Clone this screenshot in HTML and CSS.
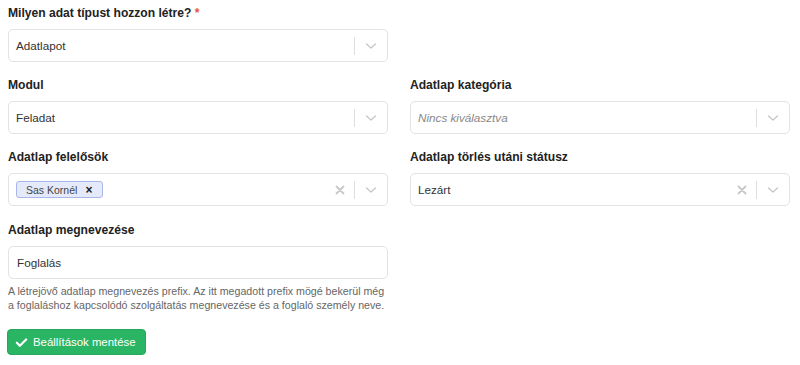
FILE: index.html
```html
<!DOCTYPE html>
<html lang="hu">
<head>
<meta charset="utf-8">
<link rel="stylesheet" href="styles.css">
</head>
<body>
<form class="form">
  <div class="group">
    <label class="label">Milyen adat típust hozzon létre? <span class="req">*</span></label>
    <div class="row">
      <div class="select">
        <span class="value">Adatlapot</span>
        <span class="indicators">
          <span class="sep"></span>
          <svg class="chev" width="20" height="20" viewBox="0 0 20 20"><path d="M5.5 8l4.5 4 4.5-4" fill="none" stroke="#c8c8c8" stroke-width="1.4" stroke-linecap="round" stroke-linejoin="round"/></svg>
        </span>
      </div>
      <div></div>
    </div>
  </div>

  <div class="group">
    <div class="row">
      <div>
        <label class="label">Modul</label>
        <div class="select">
          <span class="value">Feladat</span>
          <span class="indicators">
            <span class="sep"></span>
            <svg class="chev" width="20" height="20" viewBox="0 0 20 20"><path d="M5.5 8l4.5 4 4.5-4" fill="none" stroke="#c8c8c8" stroke-width="1.4" stroke-linecap="round" stroke-linejoin="round"/></svg>
          </span>
        </div>
      </div>
      <div>
        <label class="label">Adatlap kategória</label>
        <div class="select">
          <span class="value placeholder">Nincs kiválasztva</span>
          <span class="indicators">
            <span class="sep"></span>
            <svg class="chev" width="20" height="20" viewBox="0 0 20 20"><path d="M5.5 8l4.5 4 4.5-4" fill="none" stroke="#c8c8c8" stroke-width="1.4" stroke-linecap="round" stroke-linejoin="round"/></svg>
          </span>
        </div>
      </div>
    </div>
  </div>

  <div class="group group-3">
    <div class="row">
      <div>
        <label class="label">Adatlap felelősök</label>
        <div class="select">
          <span class="value"><span class="tag"><span class="tag-text">Sas Kornél</span><span class="tag-x">×</span></span></span>
          <span class="indicators">
            <svg class="clear" width="20" height="20" viewBox="0 0 20 20"><path d="M6.5 6.5l7 7M13.5 6.5l-7 7" fill="none" stroke="#c8c8c8" stroke-width="1.8" stroke-linecap="round"/></svg>
            <span class="sep"></span>
            <svg class="chev" width="20" height="20" viewBox="0 0 20 20"><path d="M5.5 8l4.5 4 4.5-4" fill="none" stroke="#c8c8c8" stroke-width="1.4" stroke-linecap="round" stroke-linejoin="round"/></svg>
          </span>
        </div>
      </div>
      <div>
        <label class="label">Adatlap törlés utáni státusz</label>
        <div class="select">
          <span class="value">Lezárt</span>
          <span class="indicators">
            <svg class="clear" width="20" height="20" viewBox="0 0 20 20"><path d="M6.5 6.5l7 7M13.5 6.5l-7 7" fill="none" stroke="#c8c8c8" stroke-width="1.8" stroke-linecap="round"/></svg>
            <span class="sep"></span>
            <svg class="chev" width="20" height="20" viewBox="0 0 20 20"><path d="M5.5 8l4.5 4 4.5-4" fill="none" stroke="#c8c8c8" stroke-width="1.4" stroke-linecap="round" stroke-linejoin="round"/></svg>
          </span>
        </div>
      </div>
    </div>
  </div>

  <div class="group group-4">
    <div class="row">
      <div>
        <label class="label">Adatlap megnevezése</label>
        <div class="input">Foglalás</div>
        <p class="help">A létrejövő adatlap megnevezés prefix. Az itt megadott prefix mögé bekerül még a foglaláshoz kapcsolódó szolgáltatás megnevezése és a foglaló személy neve.</p>
      </div>
      <div></div>
    </div>
  </div>

  <button type="button" class="btn">
    <svg width="13" height="13" viewBox="0 0 14 14"><path d="M2 7.3l3.2 3.2L12 3.7" fill="none" stroke="#fff" stroke-width="2.4" stroke-linecap="round" stroke-linejoin="round"/></svg>
    <span>Beállítások mentése</span>
  </button>
</form>
</body>
</html>
```
FILE: styles.css
```css
* { box-sizing: border-box; }
html, body { margin: 0; background: #fff; }
body {
  font-family: "Liberation Sans", Arial, sans-serif;
  color: #333;
  padding: 5px 8px 0 8px;
}
.form { width: 782px; }
.group { margin-bottom: 15px; }
.group-3 { margin-bottom: 16px; }
.group-4 { margin-bottom: 17px; }
.row {
  display: grid;
  grid-template-columns: 380px 380px;
  column-gap: 22px;
}
.label {
  display: block;
  font-size: 12.1px;
  font-weight: bold;
  color: #222;
  line-height: 16px;
  margin-bottom: 8px;
}
.req { color: #e5534b; font-weight: bold; }
.select, .input {
  height: 33px;
  border: 1px solid #e3e3e3;
  border-radius: 5px;
  display: flex;
  align-items: center;
  font-size: 11.7px;
  color: #333;
}
.select .value {
  flex: 1;
  padding-left: 7px;
  display: flex;
  align-items: center;
}
.placeholder { color: #888; font-style: italic; }
.indicators {
  display: flex;
  align-items: center;
  padding-right: 6px;
}
.sep {
  width: 1px;
  height: 18px;
  background: #dedede;
  margin: 0 6px 0 4px;
}
.chev, .clear { display: block; }
.tag {
  display: inline-flex;
  align-items: center;
  height: 17px;
  padding: 0 0 0 9px;
  background: #e5eafb;
  border: 1px solid #a9b6ea;
  border-radius: 3px;
  font-size: 10.5px;
  color: #444;
}
.tag-x {
  font-weight: bold;
  padding: 0 10px 0 8px;
  color: #222;
  font-size: 12px;
}
.input { padding-left: 8px; }
.help {
  margin: 5px 0 0 0;
  font-size: 10.65px;
  line-height: 14px;
  color: #666;
}
.btn {
  display: inline-flex;
  align-items: center;
  gap: 5px;
  height: 26px;
  padding: 0 9px 0 7px;
  margin-left: -1px;
  background: #2ab565;
  border: 1px solid #25a85c;
  border-radius: 4px;
  color: #fff;
  font-family: "Liberation Sans", Arial, sans-serif;
  font-size: 11.4px;
}
```
